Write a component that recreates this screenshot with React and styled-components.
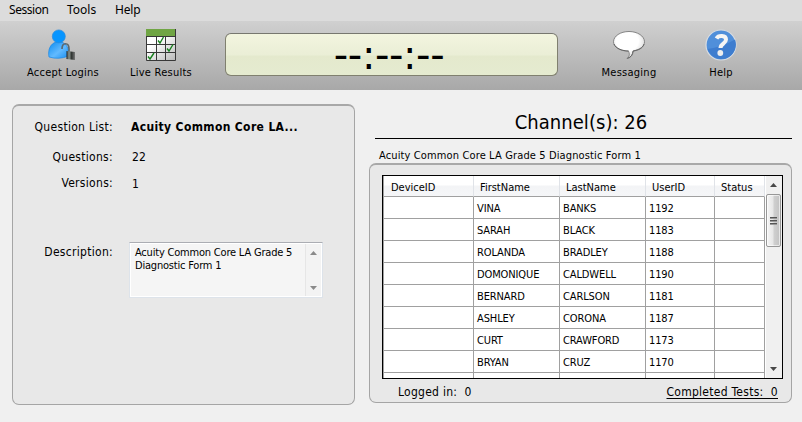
import React from "react";
import styled, { createGlobalStyle } from "styled-components";

const GlobalStyle = createGlobalStyle`
  * { box-sizing: border-box; }
  body {
    margin: 0;
    background: #f0f0f0;
    color: #000;
    font-family: "DejaVu Sans Condensed", "DejaVu Sans", sans-serif;
    font-stretch: condensed;
    font-size: 12px;
  }
`;

const Window = styled.div`
  width: 802px;
  height: 422px;
  overflow: hidden;
  display: flex;
  flex-direction: column;
  background: #f0f0f0;
  white-space: nowrap;
`;

const MenuBar = styled.nav`
  flex: none;
  height: 21px;
  display: flex;
  gap: 19px;
  padding: 0 0 2px 9px;
  align-items: center;
  background: #dcdcdc;
  font-family: "Noto Sans", sans-serif;
  font-size: 12px;
`;

const MenuItem = styled.span`
  width: ${(p) => p.$w}px;
  letter-spacing: ${(p) => p.$ls || 0}px;
`;

const ToolBar = styled.div`
  flex: none;
  height: 69px;
  display: grid;
  grid-template-columns: 22px 82px 16px 82px 23px 333px 30px 82px 10px 82px;
  background: linear-gradient(#d0d0d0, #a8a8a8);
`;

const ToolButton = styled.div`
  grid-column: ${(p) => p.$col};
  display: flex;
  flex-direction: column;
  align-items: center;
  padding-top: 7px;
  font-size: 11px;
  letter-spacing: 0.25px;
  svg { flex: none; display: block; }
  span { line-height: 16px; margin-top: 3px; }
`;

const Display = styled.div`
  grid-column: 6;
  height: 43px;
  margin-top: 12px;
  border: 1px solid #80806f;
  border-top: 1px solid #77776f;
  border-radius: 6px;
  background: linear-gradient(#f3f5df, #eaeed6 52%, #e4e9cd 53%, #e5ebd0);
  display: flex;
  justify-content: center;
  padding-right: 5px;
  font-family: "DejaVu Sans", sans-serif;
  font-stretch: normal;
  font-size: 40px;
  line-height: 43px;
  letter-spacing: -0.4px;
`;

const Content = styled.main`
  flex: 1;
  display: flex;
  gap: 14px;
  padding-left: 12px;
`;

const Panel = styled.section`
  border: 1px solid #a5a5a5;
  border-top: 2px solid #a8a8a8;
  border-radius: 7px;
  background: #e8e8e8;
`;

const DetailsPanel = styled(Panel)`
  width: 343px;
  height: 301px;
  margin-top: 14px;
  padding-top: 12px;
`;

const Field = styled.div`
  display: grid;
  grid-template-columns: 100px 1fr;
  column-gap: ${(p) => p.$gap || 19}px;
  height: ${(p) => p.$h}px;
  line-height: 18px;
`;

const Label = styled.span`
  text-align: right;
  letter-spacing: 0.3px;
`;

const Value = styled.span`
  font-weight: ${(p) => (p.$bold ? 700 : 400)};
  letter-spacing: ${(p) => (p.$bold ? 0.36 : 0.2)}px;
  padding-top: ${(p) => p.$drop || 0}px;
`;

const Description = styled.div`
  width: 194px;
  height: 56px;
  display: flex;
  justify-content: space-between;
  border: 1px solid #dde3ea;
  border-top-color: #abadb3;
  outline: 1px solid #fff;
  outline-offset: -2px;
  background: #f5f5f5;
  padding: 1px 1px 1px 5px;
  font-size: 11px;
  line-height: 13px;
  letter-spacing: -0.2px;
  margin-top: -1px;
  p { margin: 2px 0 0; white-space: pre-line; }
`;

const ScrollTrack = styled.div`
  width: ${(p) => (p.$wide ? 17 : 16)}px;
  height: 100%;
  display: flex;
  flex-direction: column;
  align-items: center;
  justify-content: space-between;
  background: ${(p) => (p.$wide ? "#f0f0f0" : "#f3f3f3")};
  border-left: 1px solid ${(p) => (p.$wide ? "#fff" : "#e6e6e6")};
  padding: ${(p) => (p.$wide ? "7px 1px 7px 0" : "7px 0 6px")};
`;

const Arrow = styled.i`
  width: 7px;
  height: 4px;
  background: ${(p) => (p.$dim ? "#8a8a8a" : "#484848")};
  clip-path: ${(p) => (p.$down ? "polygon(0 0, 100% 0, 50% 100%)" : "polygon(50% 0, 100% 100%, 0 100%)")};
`;

const Thumb = styled.div`
  width: 15px;
  height: 53px;
  margin-top: 7px;
  margin-bottom: auto;
  border: 1px solid #979797;
  border-radius: 2px;
  background: linear-gradient(90deg, #f5f5f5, #e6e6e6 48%, #d0d0d0 52%, #c2c2c2);
  box-shadow: inset 0 0 0 1px rgba(255, 255, 255, 0.6);
  display: flex;
  flex-direction: column;
  align-items: center;
  justify-content: center;
  gap: 1px;
`;

const Grip = styled.i`
  width: 7px;
  height: 2px;
  border-top: 1px solid #555;
  border-bottom: 1px solid #999;
`;

const Results = styled.div`
  width: 423px;
  display: flex;
  flex-direction: column;
`;

const Channels = styled.h1`
  margin: 0 0 0 6px;
  width: 417px;
  height: 49px;
  padding-top: 20px;
  text-align: center;
  border-bottom: 1px solid #000;
  font-size: 20px;
  font-weight: 400;
  line-height: 24px;
  letter-spacing: 0.05px;
  padding-right: 5px;
`;

const FormTitle = styled.div`
  height: 24px;
  padding: 10px 0 0 10px;
  font-size: 11px;
  line-height: 14px;
  letter-spacing: 0.13px;
`;

const ResultsPanel = styled(Panel)`
  height: 240px;
  padding: 10px 8px 0 12px;
`;

const TableFrame = styled.div`
  width: 401px;
  height: 204px;
  border: 1px solid #000;
  display: flex;
  justify-content: space-between;
  overflow: hidden;
  background: #fff;
`;

const Grid = styled.div`
  width: 382px;
  border-left: 1px solid #a0a0a0;
`;

const Row = styled.div`
  display: grid;
  grid-template-columns: 90px 86px 86px 69px 50px;
  grid-template-rows: 100%;
  height: ${(p) => (p.$head ? 21 : 22)}px;
  font-size: 11px;
  line-height: ${(p) => (p.$head ? 23 : 24)}px;
`;

const HeadCell = styled.span`
  padding-left: 7px;
  border-right: 1px solid #e0e3e8;
  border-bottom: 1px solid #a0a0a0;
  background: linear-gradient(#fff 45%, #f3f4f6 50%, #f5f6f8);
  & + & { padding-left: 6px; }
`;

const Cell = styled.span`
  padding-left: 3px;
  border-right: 1px solid #a0a0a0;
  border-bottom: 1px solid #a0a0a0;
  letter-spacing: -0.12px;
`;

const Footer = styled.div`
  display: flex;
  justify-content: space-between;
  padding: 4px 5px 0 16px;
  line-height: 18px;
  letter-spacing: 0.27px;
  white-space: pre;
`;

const Completed = styled.span`
  text-decoration: underline;
  text-underline-offset: 2px;
`;

const people = [
  ["VINA", "BANKS", "1192"],
  ["SARAH", "BLACK", "1183"],
  ["ROLANDA", "BRADLEY", "1188"],
  ["DOMONIQUE", "CALDWELL", "1190"],
  ["BERNARD", "CARLSON", "1181"],
  ["ASHLEY", "CORONA", "1187"],
  ["CURT", "CRAWFORD", "1173"],
  ["BRYAN", "CRUZ", "1170"],
  ["", "", ""],
];

function LoginIcon() {
  return (
    <svg width="34" height="34" viewBox="0 0 34 34">
      <defs>
        <linearGradient id="body" x1="0" y1="0" x2="1" y2="1">
          <stop offset="0" stopColor="#0a8bf0" />
          <stop offset=".55" stopColor="#62baff" />
          <stop offset="1" stopColor="#178df0" />
        </linearGradient>
        <linearGradient id="lock">
          <stop offset="0" stopColor="#222" />
          <stop offset=".3" stopColor="#8d9690" />
          <stop offset=".6" stopColor="#303532" />
          <stop offset="1" stopColor="#777" />
        </linearGradient>
      </defs>
      <path d="M3 29C1.500 21 5 15.500 10 14h5c6 1.500 8 7 7.500 14Q13 32 3 29Z" fill="url(#body)" stroke="#1687e6" strokeWidth=".7" />
      <circle cx="12.800" cy="8.400" r="6.500" fill="#0795ff" stroke="#2e8ddd" strokeWidth=".7" />
      <path d="M16 21c0-7 7-7 7 0v3" fill="none" stroke="#5c6970" strokeWidth="1.700" />
      <path d="M20.500 23 29 24v8l-8.500-1Z" fill="url(#lock)" />
    </svg>
  );
}

function ResultsIcon() {
  return (
    <svg width="34" height="34" viewBox="0 0 34 34">
      <defs>
        <linearGradient id="sheet" x1="0" y1="0" x2="1" y2="1">
          <stop offset=".3" stopColor="#fff" />
          <stop offset="1" stopColor="#b8b8b8" />
        </linearGradient>
      </defs>
      <rect x="2" y="8" width="30" height="24" fill="url(#sheet)" />
      <rect x="2" y="1" width="30" height="7" fill="#70a544" />
      <path d="M2.500 8v24.500h29V1M2 8.500h30M2 16.500h30M2 24.500h30M12.500 8v24M21.500 8v24" fill="none" stroke="#383838" />
      <path d="m14 12.500 2 2.500L19.500 9M23 20.500l2 2.500 4-6.500M4 28.500 6 31l4-6" fill="none" stroke="#16801c" strokeWidth="1.400" />
    </svg>
  );
}

function MessageIcon() {
  return (
    <svg width="34" height="34" viewBox="0 0 34 34">
      <defs>
        <radialGradient id="bubble" cx=".45" cy=".35" r=".65">
          <stop offset=".55" stopColor="#fff" />
          <stop offset="1" stopColor="#d2d2d2" />
        </radialGradient>
      </defs>
      <path d="M17 3.500C8.500 3.500 1.500 8 1.500 13.800c0 5.400 6.500 9.200 15 9.400 1.500 3.300 1 5-1.500 7.300 4-.8 6-3.500 6.200-7.600 6.600-1.200 11.300-4.500 11.300-9.100C32.500 8 25.500 3.500 17 3.500Z" fill="url(#bubble)" stroke="#858585" />
      <path d="M2 16c2.300 4.800 8 6.800 14.600 7M15.500 30.300c3.800-1.300 5-3.600 5.500-7.200 5.500-.8 10-3 11-7" fill="none" stroke="#555" strokeWidth=".8" />
    </svg>
  );
}

function HelpIcon() {
  return (
    <svg width="34" height="34" viewBox="0 0 34 34">
      <circle cx="17" cy="17" r="15" fill="#508fda" stroke="#d7dce2" strokeWidth="1.200" />
      <path d="M3.500 21Q18 19 31 11.500a14.500 14.500 0 0 1-25 14Q4 23 3.500 21Z" fill="#3e7dcf" />
      <path d="M12.500 10.500c2-3.500 9.500-3.300 9.500 1 0 4.200-5.500 4-5.500 8.500" fill="none" stroke="#f5f5f5" strokeWidth="4" />
      <circle cx="16.300" cy="25" r="2.900" fill="#eee" />
    </svg>
  );
}

export default function App() {
  return (
    <>
      <GlobalStyle />
      <Window>
        <MenuBar>
          <MenuItem $w={39} $ls={-0.45}>Session</MenuItem>
          <MenuItem $w={29}>Tools</MenuItem>
          <MenuItem $w={26} $ls={-0.2}>Help</MenuItem>
        </MenuBar>
        <ToolBar>
          <ToolButton $col={2}><LoginIcon /><span>Accept Logins</span></ToolButton>
          <ToolButton $col={4}><ResultsIcon /><span>Live Results</span></ToolButton>
          <Display>--:--:--</Display>
          <ToolButton $col={8}><MessageIcon /><span>Messaging</span></ToolButton>
          <ToolButton $col={10}><HelpIcon /><span>Help</span></ToolButton>
        </ToolBar>
        <Content>
          <DetailsPanel>
            <Field $h={30} $gap={18}><Label>Question List:</Label><Value $bold>Acuity Common Core LA...</Value></Field>
            <Field $h={26}><Label>Questions:</Label><Value>22</Value></Field>
            <Field $h={69}><Label>Versions:</Label><Value $drop={1}>1</Value></Field>
            <Field $h={60} $gap={16}>
              <Label>Description:</Label>
              <Description>
                <p>{"Acuity Common Core LA Grade 5\nDiagnostic Form 1"}</p>
                <ScrollTrack><Arrow $dim /><Arrow $dim $down /></ScrollTrack>
              </Description>
            </Field>
          </DetailsPanel>
          <Results>
            <Channels>Channel(s): 26</Channels>
            <FormTitle>Acuity Common Core LA Grade 5 Diagnostic Form 1</FormTitle>
            <ResultsPanel>
              <TableFrame>
                <Grid>
                  <Row $head>
                    {["DeviceID", "FirstName", "LastName", "UserID", "Status"].map((h) => (
                      <HeadCell key={h}>{h}</HeadCell>
                    ))}
                  </Row>
                  {people.map(([first, last, id], i) => (
                    <Row key={i}>
                      <Cell /><Cell>{first}</Cell><Cell>{last}</Cell><Cell>{id}</Cell><Cell />
                    </Row>
                  ))}
                </Grid>
                <ScrollTrack $wide><Arrow /><Thumb><Grip /><Grip /><Grip /></Thumb><Arrow $down /></ScrollTrack>
              </TableFrame>
              <Footer>
                <span>{"Logged in:  0"}</span>
                <Completed>{"Completed Tests:  0"}</Completed>
              </Footer>
            </ResultsPanel>
          </Results>
        </Content>
      </Window>
    </>
  );
}
